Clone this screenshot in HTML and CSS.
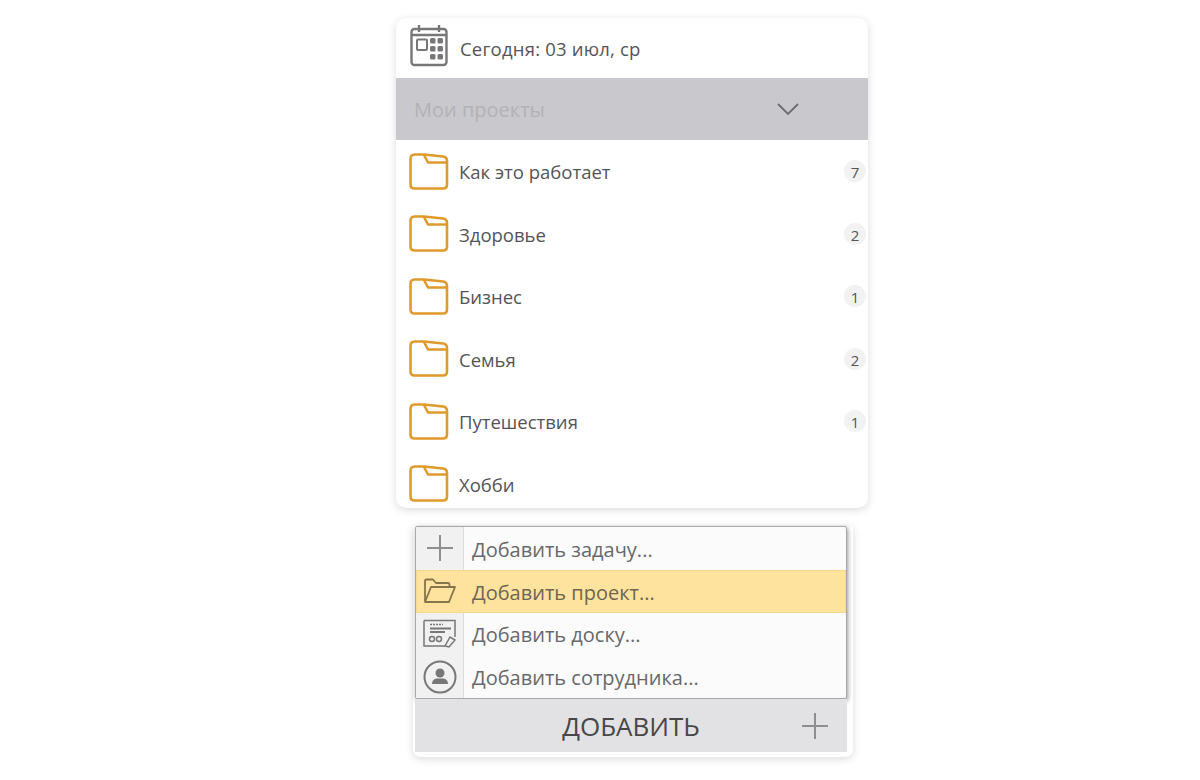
FILE: index.html
```html
<html>
<head>
<title>Проекты</title>
<link rel="stylesheet" href="styles.css">
</head>
<body>
<svg class="defs" width="0" height="0">
<symbol id="folder" viewBox="0 0 40 37">
<g fill="none" stroke="#e09a2b" stroke-width="2.6" stroke-linejoin="round">
<path d="M1.500 6Q1.500 1.500 5.500 1.500H15L34 3.500Q38 4 38 8V31.500Q38 35.500 34 35.500H5.500Q1.500 35.500 1.500 31.500Z"/>
<path d="M15 2L19 9.500H38"/>
</g>
</symbol>
</svg>

<div class="page">

<div class="card">
<div class="today">
<svg class="cal-icon" width="40" height="42" viewBox="0 0 40 42" fill="none" stroke="#77777a">
<rect x="1.500" y="4" width="35" height="36" rx="3" stroke-width="2.4"/>
<path d="M2 10H37M9 0V7M29 0V7" stroke-width="2.4"/>
<rect x="7" y="14.500" width="10" height="10.500" rx="1" stroke-width="2"/>
<g fill="#77777a" stroke="none">
<rect x="20" y="13" width="5.500" height="5.500" rx="1.500"/><rect x="27.500" y="13" width="5.500" height="5.500" rx="1.500"/>
<rect x="20" y="21" width="5.500" height="5.500" rx="1.500"/><rect x="27.500" y="21" width="5.500" height="5.500" rx="1.500"/>
<rect x="20" y="29" width="5.500" height="5.500" rx="1.500"/><rect x="27.500" y="29" width="5.500" height="5.500" rx="1.500"/>
</g>
</svg>
<span>Сегодня: 03 июл, ср</span>
</div>

<div class="projects-head">
<span>Мои проекты</span>
<svg width="24" height="14" viewBox="0 0 24 14" fill="none" stroke="#6c6c70" stroke-width="1.8"><path d="M2 2L12 12L22 2"/></svg>
</div>

<div class="row">
<svg class="folder"><use href="#folder"/></svg>
<span class="name">Как это работает</span><span class="count">7</span>
</div>
<div class="row">
<svg class="folder"><use href="#folder"/></svg>
<span class="name">Здоровье</span><span class="count">2</span>
</div>
<div class="row">
<svg class="folder"><use href="#folder"/></svg>
<span class="name">Бизнес</span><span class="count">1</span>
</div>
<div class="row">
<svg class="folder"><use href="#folder"/></svg>
<span class="name">Семья</span><span class="count">2</span>
</div>
<div class="row">
<svg class="folder"><use href="#folder"/></svg>
<span class="name">Путешествия</span><span class="count">1</span>
</div>
<div class="row">
<svg class="folder"><use href="#folder"/></svg>
<span class="name">Хобби</span>
</div>
</div>

<div class="add-box">
<div class="menu">
<div class="menu-item">
<div class="menu-icon"><svg width="30" height="30" viewBox="0 0 30 30" stroke="#8e8e90" stroke-width="2"><path d="M15 2V28M2 15H28"/></svg></div>
<span>Добавить задачу...</span>
</div>
<div class="menu-item active">
<div class="menu-icon"><svg width="34" height="26" viewBox="0 0 34 26" fill="none" stroke="#85754a" stroke-width="1.8" stroke-linejoin="round"><path d="M2 23V3Q2 1.500 3.500 1.500H10L13 5H25Q26.500 5 26.500 6.500V9"/><path d="M2 24L8 9H32L26 24Z"/></svg></div>
<span>Добавить проект...</span>
</div>
<div class="menu-item">
<div class="menu-icon"><svg width="34" height="30" viewBox="0 0 34 30" fill="none" stroke="#77777a" stroke-width="1.5"><path d="M1 1.500H32V18M22 27H1V1.500"/><path d="M7 5.500H20" stroke-dasharray="2 1"/><path d="M7 9.500H28M7 13H22" stroke-width="1.800"/><circle cx="9" cy="20" r="2.500"/><circle cx="16" cy="20" r="2.500"/><path d="M22 27L27 18L32 21L26 28Z"/></svg></div>
<span>Добавить доску...</span>
</div>
<div class="menu-item">
<div class="menu-icon"><svg width="34" height="34" viewBox="0 0 34 34" fill="none" stroke="#77777a" stroke-width="2"><circle cx="17" cy="17" r="15.500"/><circle cx="17" cy="13" r="4.500" fill="#77777a" stroke="none"/><path d="M9 24Q9 19 14 18.500H20Q25 19 25 24Z" fill="#77777a" stroke="none"/></svg></div>
<span>Добавить сотрудника...</span>
</div>
</div>
<div class="add-bar">
<span class="add-label">ДОБАВИТЬ</span>
<svg class="add-plus" width="28" height="28" viewBox="0 0 28 28" stroke="#8e8e90" stroke-width="2"><path d="M14 1V27M1 14H27"/></svg>
</div>
</div>

</div>
</body>
</html>
```

FILE: styles.css
```css
body {
margin: 0;
background: #fff;
font-family: "Open Sans", "Noto Sans", sans-serif;
color: #545458;
}

.defs {
display: block;
}

.page {
width: 472px;
margin-left: 396px;
padding-top: 18px;
}

.card {
height: 490px;
overflow: hidden;
background: #fff;
border-radius: 10px;
box-shadow: 0 2px 8px rgba(0, 0, 0, 0.14);
}

.today {
height: 60px;
display: flex;
align-items: center;
padding-left: 14px;
font-size: 18.500px;
letter-spacing: 0.200px;
}

.cal-icon {
margin: -4px 10px 0 0;
}

.projects-head {
height: 62px;
display: flex;
align-items: center;
justify-content: space-between;
padding: 0 68px 0 18px;
background: #c9c8cc;
color: #b3b2b6;
font-size: 20px;
}

.row {
height: 62.500px;
display: flex;
align-items: center;
padding: 0 2px 0 13px;
font-size: 18.500px;
}

.folder {
width: 40px;
height: 37px;
margin-right: 10px;
}

.name {
flex: 1;
padding-top: 1px;
}

.count {
width: 22px;
height: 22px;
border-radius: 50%;
background: #f2f2f2;
text-align: center;
line-height: 24px;
font-size: 15px;
}

.add-box {
width: 432px;
margin: 18px 0 0 17px;
padding: 0 6px 5px 2px;
background: #fff;
border-radius: 0 0 8px 8px;
box-shadow: 0 2px 8px rgba(0, 0, 0, 0.14);
}

.menu {
position: relative;
background: #fbfbfb;
border: 1px solid #a9a9a9;
border-radius: 2px;
box-shadow: 1px 2px 4px rgba(0, 0, 0, 0.4);
}

.menu-item {
height: 42.750px;
display: flex;
align-items: center;
font-size: 20px;
color: #68686b;
}

.menu-item span {
padding-top: 2px;
}

.menu-item.active {
background: #fee39f;
box-shadow: inset 0 0 0 1px #f6d98f;
color: #6f6650;
}

.menu-icon {
width: 47px;
height: 100%;
display: flex;
align-items: center;
justify-content: center;
margin-right: 8px;
background: #f1f1f1;
border-right: 1px solid #dcdcdc;
}

.active .menu-icon {
background: none;
border-right: none;
margin-right: 9px;
}

.add-bar {
height: 53px;
display: flex;
align-items: center;
justify-content: center;
position: relative;
background: #e2e2e4;
}

.add-label {
font-size: 26px;
color: #47474a;
}

.add-plus {
position: absolute;
right: 18px;
top: 13px;
}
```
